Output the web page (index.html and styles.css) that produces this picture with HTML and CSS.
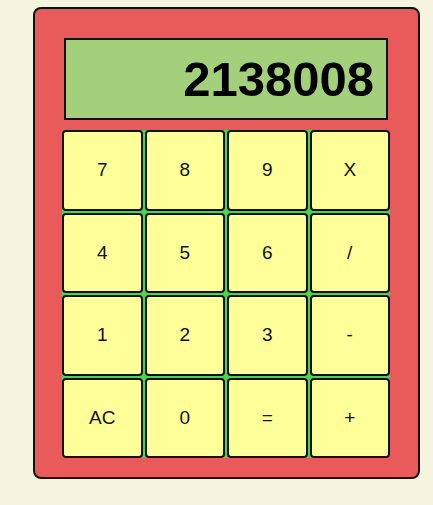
FILE: index.html
```html
<!DOCTYPE html>
<html>
<head>
<meta charset="utf-8">
<link rel="stylesheet" href="styles.css">
</head>
<body>
<div class="calc">
  <div class="display">2138008</div>
  <div class="keypad">
    <button class="key">7</button>
    <button class="key">8</button>
    <button class="key">9</button>
    <button class="key">X</button>
    <button class="key">4</button>
    <button class="key">5</button>
    <button class="key">6</button>
    <button class="key">/</button>
    <button class="key">1</button>
    <button class="key">2</button>
    <button class="key">3</button>
    <button class="key">-</button>
    <button class="key">AC</button>
    <button class="key">0</button>
    <button class="key">=</button>
    <button class="key">+</button>
  </div>
</div>
</body>
</html>
```
FILE: styles.css
```css
html, body {
  margin: 0;
  padding: 0;
  background: #f5f4de;
  font-family: "Liberation Sans", Arial, sans-serif;
}
body {
  padding: 7px 0 0 33px;
}
.calc {
  box-sizing: border-box;
  width: 387px;
  height: 472px;
  border: 2px solid #111;
  border-radius: 8px;
  background: #e95b5b;
  padding: 29px 28px 19px 27px;
  display: flex;
  flex-direction: column;
}
.display {
  box-sizing: border-box;
  height: 82px;
  margin: 0 2px 10px 2px;
  border: 2px solid #111;
  background: #a4d07b;
  display: flex;
  align-items: center;
  justify-content: flex-end;
  padding-right: 12px;
  font-size: 49px;
  font-weight: bold;
  color: #000;
}
.keypad {
  height: 328px;
  display: grid;
  grid-template-columns: repeat(4, 1fr);
  grid-template-rows: repeat(4, 1fr);
  gap: 2px;
  background: #4fd44f;
  border-radius: 5px;
}
.key {
  box-sizing: border-box;
  margin: 0;
  padding: 0;
  border: 2px solid #111;
  border-radius: 4px;
  background: #ffff99;
  font-family: "Liberation Sans", Arial, sans-serif;
  font-size: 19px;
  color: #111;
}
```
